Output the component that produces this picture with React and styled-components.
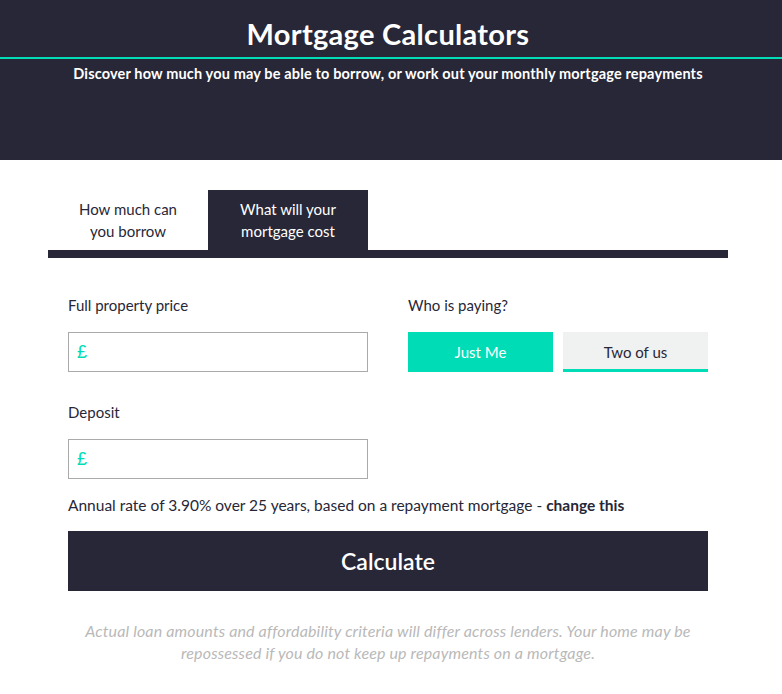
import React, { useState } from "react";
import styled, { createGlobalStyle } from "styled-components";

const GlobalStyle = createGlobalStyle`
  body {
    margin: 0;
    background: #ffffff;
    font-family: "Lato", "Liberation Sans", sans-serif;
    color: #272737;
  }
`;

const tabs = ["How much can you borrow", "What will your mortgage cost"];

export default function App() {
  const [activeTab, setActiveTab] = useState(1);
  const [payer, setPayer] = useState("me");

  return (
    <>
      <GlobalStyle />
      <Header>
        <Title>Mortgage Calculators</Title>
        <Subtitle>
          Discover how much you may be able to borrow, or work out your monthly
          mortgage repayments
        </Subtitle>
      </Header>
      <Panel>
        <TabRow>
          {tabs.map((t, i) => (
            <Tab key={t} $active={activeTab === i} onClick={() => setActiveTab(i)}>
              {t}
            </Tab>
          ))}
        </TabRow>
        <Form>
          <Grid>
            <Field>
              <Label>Full property price</Label>
              <InputBox>
                <Pound>£</Pound>
                <Input />
              </InputBox>
            </Field>
            <Field>
              <Label>Who is paying?</Label>
              <ChoiceRow>
                <Choice $selected={payer === "me"} onClick={() => setPayer("me")}>
                  Just Me
                </Choice>
                <Choice $selected={payer === "two"} onClick={() => setPayer("two")}>
                  Two of us
                </Choice>
              </ChoiceRow>
            </Field>
            <Field>
              <Label>Deposit</Label>
              <InputBox>
                <Pound>£</Pound>
                <Input />
              </InputBox>
            </Field>
          </Grid>
          <Rate>
            Annual rate of 3.90% over 25 years, based on a repayment mortgage -{" "}
            <strong>change this</strong>
          </Rate>
          <CalcButton>Calculate</CalcButton>
          <Disclaimer>
            Actual loan amounts and affordability criteria will differ across
            lenders. Your home may be repossessed if you do not keep up
            repayments on a mortgage.
          </Disclaimer>
        </Form>
      </Panel>
    </>
  );
}

const Header = styled.header`
  height: 160px;
  background: #272737;
  color: #fff;
  box-sizing: border-box;
  padding-top: 17px;
  text-align: center;
`;

const Title = styled.h1`
  margin: 0;
  padding: 0 6px 6px 0;
  font-size: 29px;
  font-weight: 700;
  line-height: 34px;
  letter-spacing: 0.3px;
  border-bottom: 2px solid #00dcb6;
`;

const Subtitle = styled.p`
  margin: 6px 0 0;
  padding-right: 6px;
  font-size: 14.5px;
  font-weight: 700;
  line-height: 18px;
  letter-spacing: 0.15px;
`;

const Panel = styled.main`
  width: 680px;
  margin: 30px 0 0 48px;
`;

const TabRow = styled.div`
  display: flex;
  border-bottom: 8px solid #272737;
`;

const Tab = styled.button`
  width: 160px;
  height: 60px;
  border: none;
  padding: 0 28px;
  font-family: "Lato", sans-serif;
  font-size: 15px;
  line-height: 22px;
  cursor: pointer;
  background: ${({ $active }) => ($active ? "#272737" : "#fff")};
  color: ${({ $active }) => ($active ? "#fff" : "#272737")};
`;

const Form = styled.div`
  padding: 37px 20px 0;
`;

const Grid = styled.div`
  display: grid;
  grid-template-columns: 300px 300px;
  column-gap: 40px;
  row-gap: 30px;
`;

const Field = styled.div`
  display: flex;
  flex-direction: column;
`;

const Label = styled.label`
  font-size: 15px;
  line-height: 20px;
  margin-bottom: 17px;
`;

const InputBox = styled.div`
  display: flex;
  align-items: center;
  height: 40px;
  border: 1px solid #aaaaaa;
  box-sizing: border-box;
  padding-left: 8px;
`;

const Pound = styled.span`
  color: #00dcb6;
  font-family: "Liberation Sans", sans-serif;
  font-size: 18px;
`;

const Input = styled.input`
  flex: 1;
  border: none;
  outline: none;
  height: 100%;
  font-size: 15px;
  background: transparent;
`;

const ChoiceRow = styled.div`
  display: flex;
  gap: 10px;
`;

const Choice = styled.button`
  flex: 1;
  height: 40px;
  border: none;
  font-family: "Lato", sans-serif;
  font-size: 15px;
  cursor: pointer;
  box-sizing: border-box;
  background: ${({ $selected }) => ($selected ? "#00dcb6" : "#f0f1f1")};
  color: ${({ $selected }) => ($selected ? "#fff" : "#272737")};
  border-bottom: ${({ $selected }) => ($selected ? "none" : "3px solid #00dcb6")};
  padding-top: ${({ $selected }) => ($selected ? "0" : "3px")};
`;

const Rate = styled.p`
  margin: 16px 0 0;
  font-size: 15.5px;
  line-height: 20px;

  strong {
    font-weight: 700;
  }
`;

const CalcButton = styled.button`
  display: block;
  width: 100%;
  height: 60px;
  margin-top: 16px;
  border: none;
  background: #272737;
  color: #fff;
  font-family: "Lato", sans-serif;
  font-size: 23px;
  font-weight: 600;
  cursor: pointer;
`;

const Disclaimer = styled.p`
  margin: 29px 0 0;
  text-align: center;
  font-style: italic;
  font-size: 16px;
  line-height: 22px;
  letter-spacing: 0.15px;
  color: #b9b9b9;
`;
